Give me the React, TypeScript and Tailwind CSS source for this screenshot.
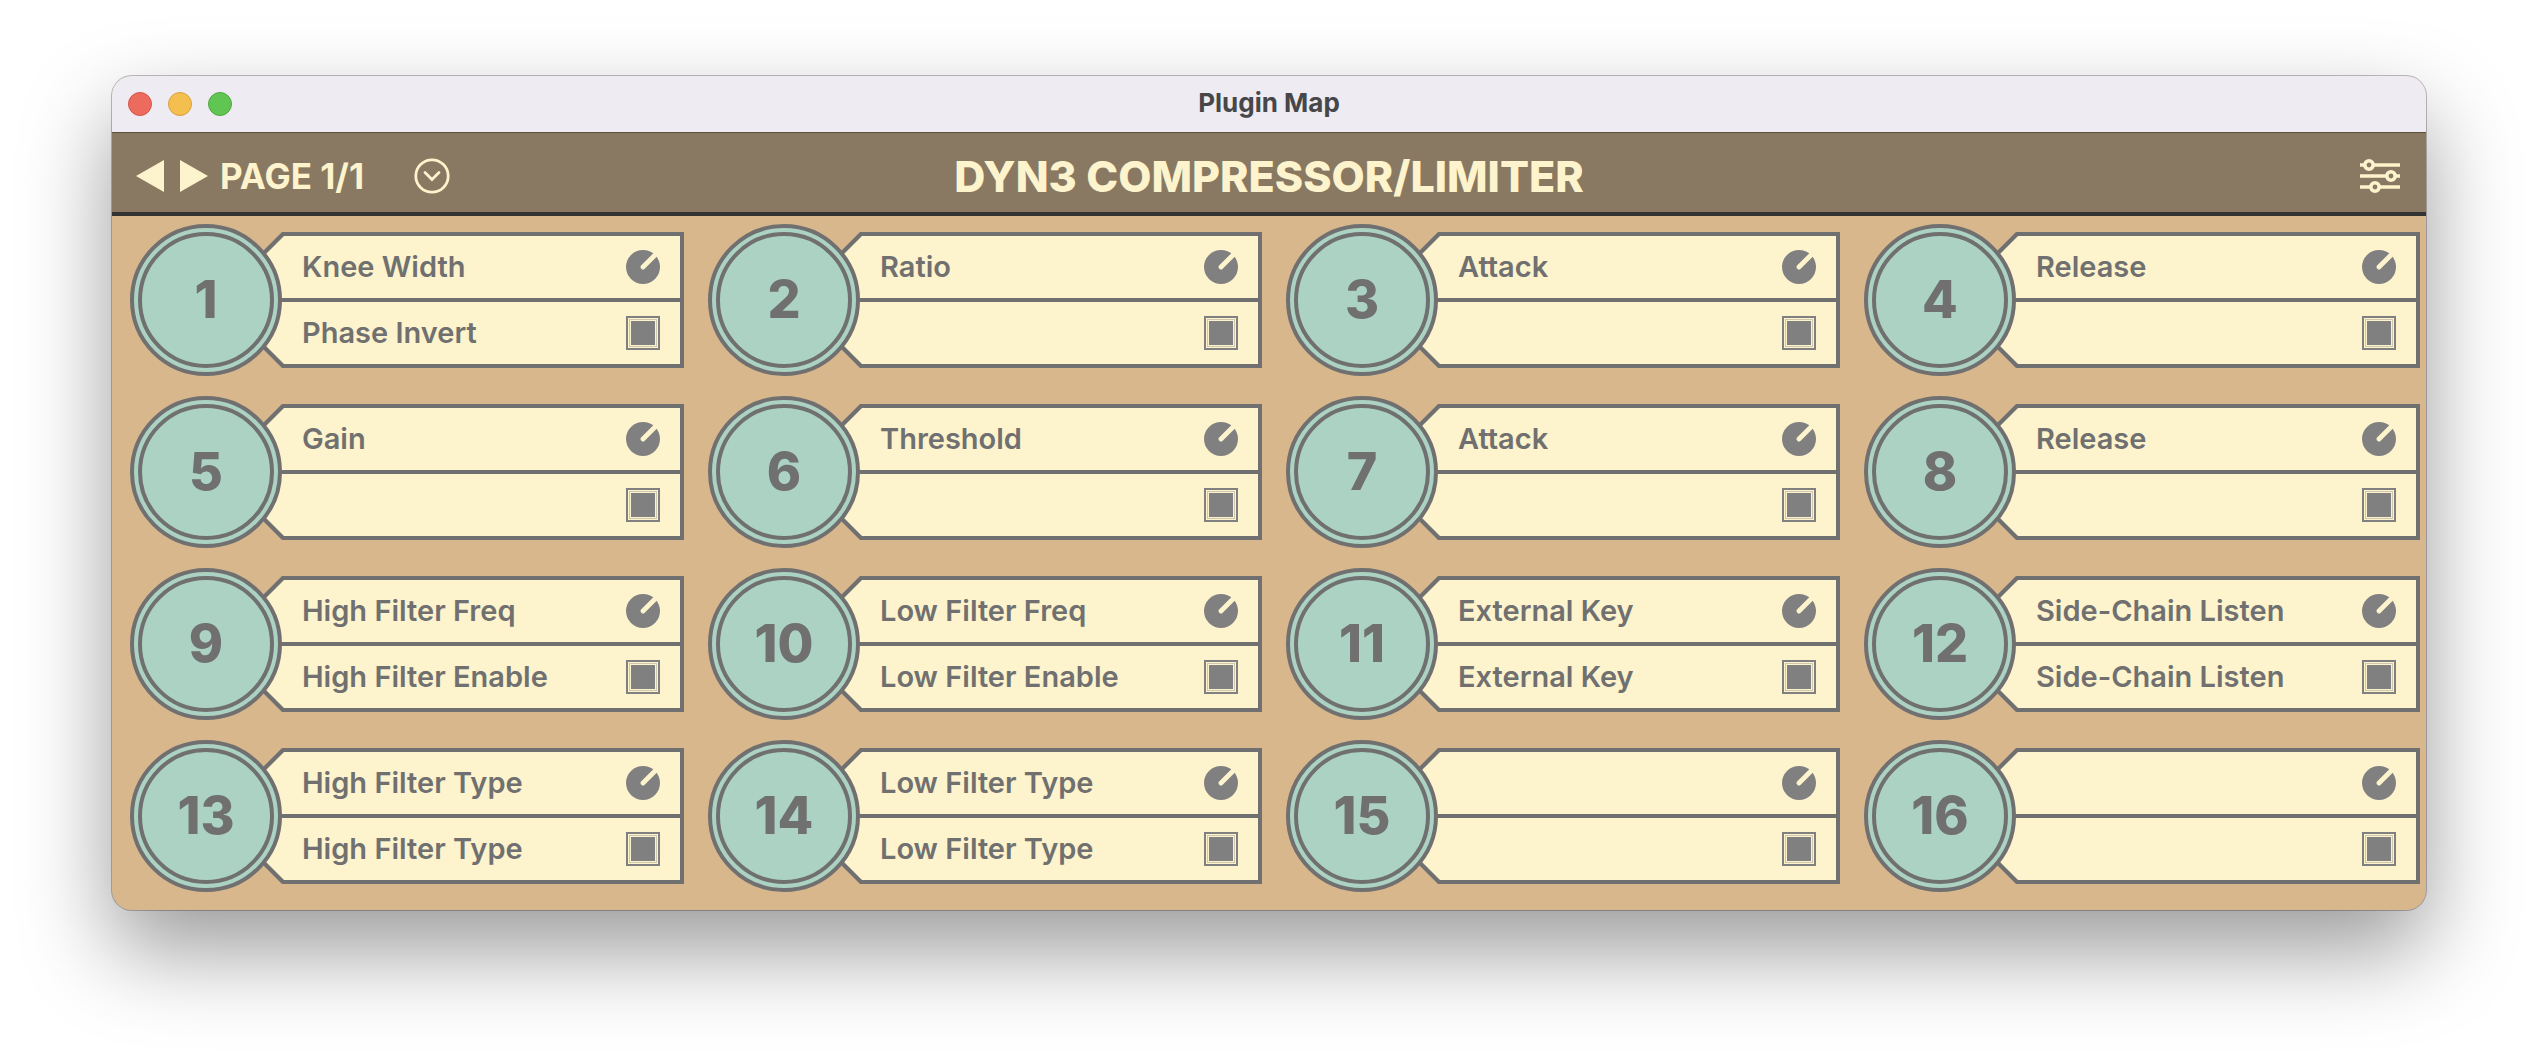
import React, { useState } from 'react';

const knobs = [
    { top: 'Knee Width', bottom: 'Phase Invert' },
    { top: 'Ratio', bottom: '' },
    { top: 'Attack', bottom: '' },
    { top: 'Release', bottom: '' },
    { top: 'Gain', bottom: '' },
    { top: 'Threshold', bottom: '' },
    { top: 'Attack', bottom: '' },
    { top: 'Release', bottom: '' },
    { top: 'High Filter Freq', bottom: 'High Filter Enable' },
    { top: 'Low Filter Freq', bottom: 'Low Filter Enable' },
    { top: 'External Key', bottom: 'External Key' },
    { top: 'Side-Chain Listen', bottom: 'Side-Chain Listen' },
    { top: 'High Filter Type', bottom: 'High Filter Type' },
    { top: 'Low Filter Type', bottom: 'Low Filter Type' },
    { top: '', bottom: '' },
    { top: '', bottom: '' },
];

const KnobIcon = () => (
    <svg viewBox="0 0 34 34" className="size-[34px] shrink-0" aria-hidden="true">
        <circle cx="17" cy="17" r="17" fill="#808080" />
        <path d="M17 17L31 3" stroke="#fdf3cc" strokeWidth="4.8" strokeLinecap="round" />
    </svg>
);

const KnobCard = ({ number, top, bottom }: { number: number; top: string; bottom: string }) => {
    const [on, setOn] = useState(true);
    const id = `switch-${number}`;

    return (
        <div className="flex items-center">
            <div className="z-10 size-[152px] shrink-0 rounded-full border-4 border-[#707070] bg-[#abd2c3] p-1">
                <div className="flex h-full items-center justify-center rounded-full border-4 border-[#707070] text-[52px] leading-none font-extrabold text-[#707070]">
                    {number}
                </div>
            </div>
            {/* the outline is a clipped gray block with a smaller cream block inside */}
            <div className="-ml-[66px] h-[136px] min-w-0 flex-1 bg-[#707070] p-1 pl-0 [clip-path:polygon(66px_0,100%_0,100%_100%,66px_100%,-2px_50%)]">
                <div className="flex h-full flex-col gap-1 bg-[#707070] [clip-path:polygon(68px_0,100%_0,100%_100%,68px_100%,4px_50%)]">
                    <div className="flex flex-1 items-center justify-between bg-[#fdf3cc] pr-5 pl-[86px]">
                        <span className="truncate text-[29px] leading-9 font-semibold">{top}</span>
                        <KnobIcon />
                    </div>
                    <div className="flex flex-1 items-center justify-between bg-[#fdf3cc] pr-5 pl-[86px]">
                        <label htmlFor={id} className="truncate text-[29px] leading-9 font-semibold">{bottom}</label>
                        <input
                            id={id}
                            type="checkbox"
                            aria-label={bottom || `Switch ${number}`}
                            checked={on}
                            onChange={() => setOn(!on)}
                            className="size-[34px] shrink-0 appearance-none border-2 border-[#808080] bg-clip-content p-[3px] shadow-[inset_0_0_0_1px_#fdf3cc,inset_0_0_0_2px_#cfc7ab] checked:bg-[#808080]"
                        />
                    </div>
                </div>
            </div>
        </div>
    );
};

const App = () => {
    return (
        <div className="bg-white px-28 pt-19 pb-37 font-['Inter',sans-serif]">
            <div className="overflow-hidden rounded-[20px] bg-[#d8b78c] text-[#707070] shadow-[0_0_0_1px_rgba(0,0,0,0.25),0_40px_90px_rgba(0,0,0,0.4)]">
                <div className="grid h-14 grid-cols-[1fr_auto_1fr] items-center bg-[#eeebf2] px-4">
                    <div className="flex gap-4">
                        <button aria-label="Close" className="size-6 rounded-full border border-[#d5544a] bg-[#ed6a5e]" />
                        <button aria-label="Minimize" className="size-6 rounded-full border border-[#d6a03c] bg-[#f5bf4f]" />
                        <button aria-label="Zoom" className="size-6 rounded-full border border-[#4fa73e] bg-[#61c554]" />
                    </div>
                    <h2 className="pb-0.5 text-[26px] leading-8 font-bold text-[#474749]">Plugin Map</h2>
                </div>

                <div className="grid h-[84px] grid-cols-[1fr_auto_1fr] items-center border-t border-b-4 border-t-[#5c5136] border-b-[#333333] bg-[#897962] px-6 pt-1.5 text-[#fdf3cc]">
                    <div className="flex items-center">
                        <button aria-label="Previous page" className="mr-4">
                            <svg viewBox="0 0 28 32" className="h-8 w-7" fill="currentColor"><path d="M0 16L28 0V32Z" /></svg>
                        </button>
                        <button aria-label="Next page" className="mr-3">
                            <svg viewBox="0 0 28 32" className="h-8 w-7" fill="currentColor"><path d="M28 16L0 0V32Z" /></svg>
                        </button>
                        <span className="text-[35px] leading-10 font-bold">PAGE 1/1</span>
                        <button aria-label="Choose page" className="ml-[50px]">
                            <svg viewBox="0 0 36 36" className="size-9" fill="none" stroke="currentColor">
                                <circle cx="18" cy="18" r="16.2" strokeWidth="2.8" />
                                <path d="M11 14.5L18 21.5L25 14.5" strokeWidth="2.8" strokeLinecap="round" />
                            </svg>
                        </button>
                    </div>
                    <h1 className="text-[43px] leading-[56px] font-extrabold">DYN3 COMPRESSOR/LIMITER</h1>
                    <button aria-label="Settings" className="mr-0.5 justify-self-end">
                        <svg viewBox="0 0 40 34" className="h-[34px] w-10" fill="none" stroke="currentColor" strokeWidth="3.6">
                            <path d="M0 6H5M13 6H40M0 17H27M35 17H40M0 28H11M19 28H40" />
                            <circle cx="9" cy="6" r="4.2" />
                            <circle cx="31" cy="17" r="4.2" />
                            <circle cx="15" cy="28" r="4.2" />
                        </svg>
                    </button>
                </div>

                <div className="grid grid-cols-[554fr_554fr_554fr_556fr] gap-x-6 gap-y-5 pt-2 pr-1.5 pb-[18px] pl-[18px]">
                    {knobs.map((knob, index) => (
                        <KnobCard key={index} number={index + 1} top={knob.top} bottom={knob.bottom} />
                    ))}
                </div>
            </div>
        </div>
    );
};

export default App;
